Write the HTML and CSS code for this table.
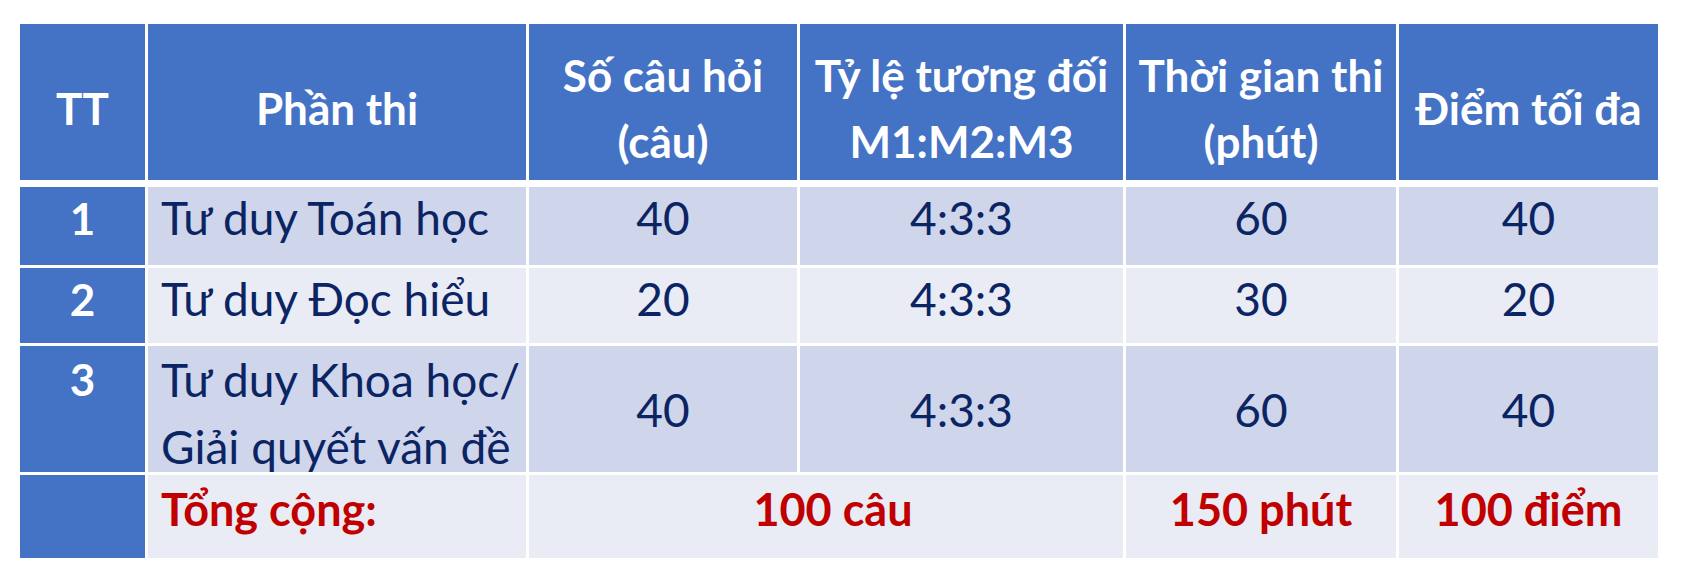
FILE: index.html
```html
<!DOCTYPE html>
<html lang="vi">
<head>
<meta charset="utf-8">
<title>Cấu trúc bài thi</title>
<link rel="stylesheet" href="styles.css">
</head>
<body>
<table class="exam">
  <colgroup>
    <col class="c-tt">
    <col class="c-part">
    <col class="c-count">
    <col class="c-ratio">
    <col class="c-time">
    <col class="c-score">
  </colgroup>
  <thead>
    <tr>
      <th>TT</th>
      <th>Phần thi</th>
      <th>Số câu hỏi<br>(câu)</th>
      <th>Tỷ lệ tương đối<br>M1:M2:M3</th>
      <th>Thời gian thi<br>(phút)</th>
      <th class="last">Điểm tối đa</th>
    </tr>
  </thead>
  <tbody>
    <tr class="odd r1">
      <td class="num">1</td>
      <td class="name">Tư duy Toán học</td>
      <td>40</td>
      <td>4:3:3</td>
      <td>60</td>
      <td class="last">40</td>
    </tr>
    <tr class="even r2">
      <td class="num">2</td>
      <td class="name">Tư duy Đọc hiểu</td>
      <td>20</td>
      <td>4:3:3</td>
      <td>30</td>
      <td class="last">20</td>
    </tr>
    <tr class="odd r3">
      <td class="num">3</td>
      <td class="name"><div class="lines">Tư duy Khoa học/<br>Giải quyết vấn đề</div></td>
      <td>40</td>
      <td>4:3:3</td>
      <td>60</td>
      <td class="last">40</td>
    </tr>
    <tr class="even total">
      <td class="num"></td>
      <td class="name">Tổng cộng:</td>
      <td class="sum" colspan="2">100 câu</td>
      <td>150 phút</td>
      <td class="last">100 điểm</td>
    </tr>
  </tbody>
</table>
</body>
</html>
```

FILE: styles.css
```css
html, body {
  margin: 0;
  padding: 0;
  background: #ffffff;
}

body {
  padding: 24px 0 0 20px;
  font-family: Lato, "Liberation Sans", Arial, sans-serif;
}

.exam {
  border-collapse: separate;
  border-spacing: 0;
  table-layout: fixed;
  width: 1638px;
}

.c-tt { width: 128px; }
.c-part { width: 381px; }
.c-count { width: 271px; }
.c-ratio { width: 326px; }
.c-time { width: 273px; }
.c-score { width: 259px; }

.exam th,
.exam td {
  box-sizing: border-box;
  padding: 0;
  border-right: 3px solid #ffffff;
  border-bottom: 3px solid #ffffff;
  text-align: center;
  vertical-align: middle;
}

.exam .last {
  border-right: 0;
}

.exam th {
  height: 163px;
  padding-top: 12px;
  background: #4472c4;
  color: #ffffff;
  font-size: 44px;
  line-height: 66px;
  font-weight: 700;
  border-bottom-width: 7px;
}

.exam td {
  color: #0b2463;
  font-size: 46px;
  line-height: 67px;
  font-weight: 400;
}

.odd td { background: #cfd5ea; }
.even td { background: #e9ebf5; }

.exam td.num {
  background: #4472c4;
  color: #ffffff;
  font-size: 44px;
  font-weight: 700;
}

.exam td.name {
  text-align: left;
  padding-left: 13px;
}

.r1 td,
.r2 td {
  vertical-align: top;
  line-height: 56px;
  padding-top: 3px;
}

.r1 td { height: 81px; }
.r2 td { height: 78px; }

.r3 td { height: 129px; }
.r3 td.num,
.r3 td.name {
  vertical-align: top;
  padding-top: 0;
}
.r3 .lines {
  margin-bottom: -12px;
}

.total td {
  height: 83px;
  border-bottom: 0;
  color: #c00000;
  font-size: 45px;
  line-height: 56px;
  font-weight: 700;
  vertical-align: top;
  padding-top: 6px;
}

.total td.sum {
  padding-left: 14px;
}
```
